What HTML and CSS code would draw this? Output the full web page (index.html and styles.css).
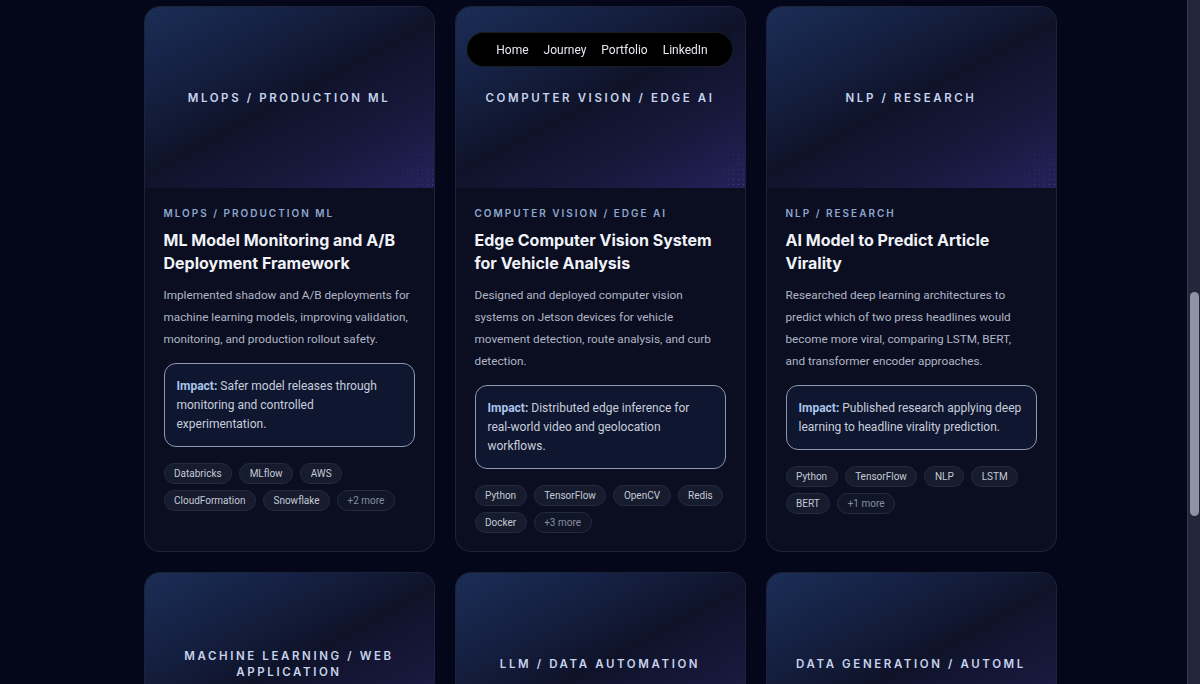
FILE: index.html
```html
<!DOCTYPE html>
<html lang="en">
<head>
<meta charset="utf-8">
<title>Portfolio</title>
<link rel="stylesheet" href="styles.css">
</head>
<body>
<nav class="topnav">
  <a href="#home">Home</a>
  <a href="#journey">Journey</a>
  <a href="#portfolio">Portfolio</a>
  <a href="#linkedin">LinkedIn</a>
</nav>

<main class="portfolio" id="portfolio">
  <article class="card">
    <div class="card-cover"><span>MLOPS / PRODUCTION ML</span></div>
    <div class="card-body">
      <p class="card-kicker">MLOPS / PRODUCTION ML</p>
      <h3 class="card-title">ML Model Monitoring and A/B Deployment Framework</h3>
      <p class="card-text">Implemented shadow and A/B deployments for machine learning models, improving validation, monitoring, and production rollout safety.</p>
      <div class="impact"><strong>Impact:</strong> Safer model releases through monitoring and controlled experimentation.</div>
      <ul class="tags">
        <li>Databricks</li><li>MLflow</li><li>AWS</li><li>CloudFormation</li><li>Snowflake</li><li class="more">+2 more</li>
      </ul>
    </div>
  </article>

  <article class="card">
    <div class="card-cover"><span>COMPUTER VISION / EDGE AI</span></div>
    <div class="card-body">
      <p class="card-kicker">COMPUTER VISION / EDGE AI</p>
      <h3 class="card-title">Edge Computer Vision System for Vehicle Analysis</h3>
      <p class="card-text">Designed and deployed computer vision systems on Jetson devices for vehicle movement detection, route analysis, and curb detection.</p>
      <div class="impact"><strong>Impact:</strong> Distributed edge inference for real-world video and geolocation workflows.</div>
      <ul class="tags">
        <li>Python</li><li>TensorFlow</li><li>OpenCV</li><li>Redis</li><li>Docker</li><li class="more">+3 more</li>
      </ul>
    </div>
  </article>

  <article class="card">
    <div class="card-cover"><span>NLP / RESEARCH</span></div>
    <div class="card-body">
      <p class="card-kicker">NLP / RESEARCH</p>
      <h3 class="card-title">AI Model to Predict Article Virality</h3>
      <p class="card-text">Researched deep learning architectures to predict which of two press headlines would become more viral, comparing LSTM, BERT, and transformer encoder approaches.</p>
      <div class="impact"><strong>Impact:</strong> Published research applying deep learning to headline virality prediction.</div>
      <ul class="tags">
        <li>Python</li><li>TensorFlow</li><li>NLP</li><li>LSTM</li><li>BERT</li><li class="more">+1 more</li>
      </ul>
    </div>
  </article>

  <article class="card">
    <div class="card-cover"><span>MACHINE LEARNING / WEB APPLICATION</span></div>
    <div class="card-body">
      <p class="card-kicker">MACHINE LEARNING / WEB APPLICATION</p>
    </div>
  </article>

  <article class="card">
    <div class="card-cover"><span>LLM / DATA AUTOMATION</span></div>
    <div class="card-body">
      <p class="card-kicker">LLM / DATA AUTOMATION</p>
    </div>
  </article>

  <article class="card">
    <div class="card-cover"><span>DATA GENERATION / AUTOML</span></div>
    <div class="card-body">
      <p class="card-kicker">DATA GENERATION / AUTOML</p>
    </div>
  </article>
</main>

<div class="scroll-rail" aria-hidden="true"><div class="scroll-thumb"></div></div>
</body>
</html>
```

FILE: styles.css
```css
* {
  box-sizing: border-box;
}

html, body {
  height: 100%;
}

body {
  margin: 0;
  overflow: hidden;
  background: #04071a;
  color: #e8ebf3;
  font-family: Roboto, "Liberation Sans", sans-serif;
  -webkit-font-smoothing: antialiased;
}

/* floating pill navigation */
.topnav {
  position: fixed;
  top: 32px;
  left: 50%;
  transform: translateX(-50%);
  z-index: 10;
  display: flex;
  align-items: center;
  gap: 15px;
  height: 35px;
  padding: 1px 25px 0 29px;
  background: #000;
  border: 1px solid rgba(150, 165, 200, 0.16);
  border-radius: 999px;
}

.topnav a {
  color: #e6e9f1;
  text-decoration: none;
  font-size: 12px;
}

/* project grid */
.portfolio {
  display: grid;
  grid-template-columns: repeat(3, 1fr);
  gap: 20px;
  width: 913px;
  margin: 0 auto;
  padding-top: 6px;
}

.card {
  display: flex;
  flex-direction: column;
  background: #0a0e20;
  border: 1px solid rgba(140, 155, 200, 0.14);
  border-radius: 16px;
  overflow: hidden;
}

.card-cover {
  position: relative;
  height: 181px;
  display: flex;
  align-items: center;
  justify-content: center;
  padding: 0 26px;
  text-align: center;
  background: linear-gradient(152deg, #1b2d55 0%, #152144 24%, #0f1329 50%, #18183c 74%, #25215a 100%);
}

/* fine dot texture fading in from the corners */
.card-cover::after {
  content: "";
  position: absolute;
  inset: 0;
  background-image: radial-gradient(circle, rgba(170, 180, 230, 0.28) 0.6px, transparent 1px);
  background-size: 5px 5px;
  -webkit-mask-image: radial-gradient(circle at 100% 100%, #000 0, rgba(0,0,0,0.4) 24px, transparent 52px),
                      radial-gradient(circle at 0 0, rgba(0,0,0,0.45) 0, transparent 24px);
  mask-image: radial-gradient(circle at 100% 100%, #000 0, rgba(0,0,0,0.4) 24px, transparent 52px),
              radial-gradient(circle at 0 0, rgba(0,0,0,0.45) 0, transparent 24px);
  pointer-events: none;
}

.card-cover span {
  position: relative;
  z-index: 1;
  font-family: Inter, Roboto, sans-serif;
  font-size: 11.5px;
  font-weight: 600;
  letter-spacing: 2.6px;
  line-height: 16px;
  color: #c6d3ec;
}

.card-body {
  flex: 1;
  padding: 18px 19px 18px;
}

.card-kicker {
  margin: 0;
  font-family: Inter, Roboto, sans-serif;
  font-size: 10px;
  font-weight: 600;
  letter-spacing: 2px;
  line-height: 14px;
  color: #8ea7d0;
}

.card-title {
  margin: 9px 0 0;
  font-family: Inter, Roboto, sans-serif;
  font-size: 16px;
  font-weight: 700;
  line-height: 22.5px;
  color: #f0f2f8;
}

.card-text {
  margin: 10px 0 0;
  padding-right: 4px;
  font-size: 11.75px;
  line-height: 22px;
  color: #b0b6c6;
}

.impact {
  margin-top: 13px;
  padding: 12.5px 12px;
  border: 1px solid #8f98b0;
  border-radius: 12px;
  background: #0f1630;
  font-size: 12px;
  line-height: 19px;
  color: #c8cedb;
}

.impact strong {
  font-weight: 700;
  color: #a9c4ea;
}

.tags {
  display: flex;
  flex-wrap: wrap;
  gap: 6px 7px;
  margin: 16px 0 0;
  padding: 0;
  list-style: none;
}

.tags li {
  height: 21px;
  padding: 0 9.5px;
  display: flex;
  align-items: center;
  font-size: 10px;
  color: #c5cad7;
  background: #161b2d;
  border: 1px solid #252b3e;
  border-radius: 999px;
}

.tags li.more {
  color: #868da0;
  background: #111627;
}

/* decorative scroll rail on the right edge */
.scroll-rail {
  position: fixed;
  top: 0;
  right: 0;
  width: 13px;
  height: 100%;
  background: #22263a;
  border-left: 1px solid #363a4e;
  z-index: 20;
}

.scroll-thumb {
  position: absolute;
  top: 292px;
  left: 2px;
  width: 9px;
  height: 224px;
  border-radius: 5px;
  background: #8e93a4;
}
```
